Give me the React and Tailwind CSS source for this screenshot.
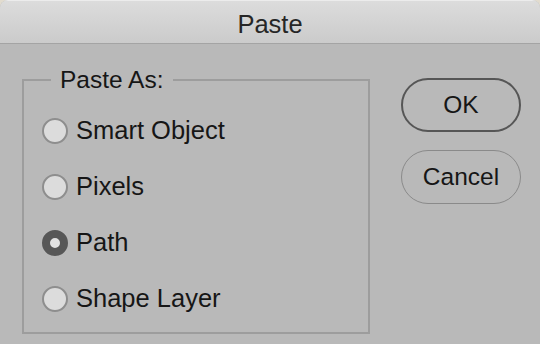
import React, { useState } from "react";

const options = ["Smart Object", "Pixels", "Path", "Shape Layer"];

function Radio({ checked }) {
  return checked ? (
    <span className="w-[26px] h-[26px] rounded-full border-[8px] border-[#575757] bg-[#e2e2e2] shrink-0" />
  ) : (
    <span className="w-[26px] h-[26px] rounded-full border-2 border-[#8e8e8e] bg-[#dcdcdc] shrink-0" />
  );
}

export default function App() {
  const [selected, setSelected] = useState("Path");

  return (
    <div
      className="w-[540px] h-[344px] bg-[#e2dccf] text-[#161616]"
      style={{ fontFamily: '"Liberation Sans", Arial, sans-serif' }}
    >
      <div className="h-full flex flex-col rounded-t-[8px] overflow-hidden bg-[#b9b9b9]">
        <div className="h-[44px] shrink-0 flex items-center justify-center pt-[5px] border-t border-[#ececec] border-b border-b-[#a4a4a4] bg-gradient-to-b from-[#dcdcdc] to-[#cbcbcb]">
          <span className="text-[25.5px] text-[#262626] leading-none">Paste</span>
        </div>

        <div className="flex flex-1 pl-[22px] pr-[19px]">
          <fieldset className="w-[348px] mt-[22px] mb-[10px] border-2 border-[#9d9d9d] px-0 pt-[9px] pb-0 m-0 min-w-0">
            <legend className="ml-[27px] px-[9px] text-[24.5px] leading-[28px]">
              Paste As:
            </legend>
            <div className="flex flex-col">
              {options.map((opt) => (
                <label
                  key={opt}
                  onClick={() => setSelected(opt)}
                  className="h-[56px] flex items-center gap-[8px] pl-[18px] cursor-default"
                >
                  <Radio checked={selected === opt} />
                  <span className="text-[25.5px] leading-none">{opt}</span>
                </label>
              ))}
            </div>
          </fieldset>

          <div className="ml-auto mt-[34px] flex flex-col gap-[18px]">
            <button className="w-[120px] h-[54px] rounded-full border-2 border-[#565656] text-[24.5px] text-[#161616]">
              OK
            </button>
            <button className="w-[120px] h-[54px] rounded-full border-[1.5px] border-[#8a8a8a] text-[24.5px] text-[#161616]">
              Cancel
            </button>
          </div>
        </div>
      </div>
    </div>
  );
}
